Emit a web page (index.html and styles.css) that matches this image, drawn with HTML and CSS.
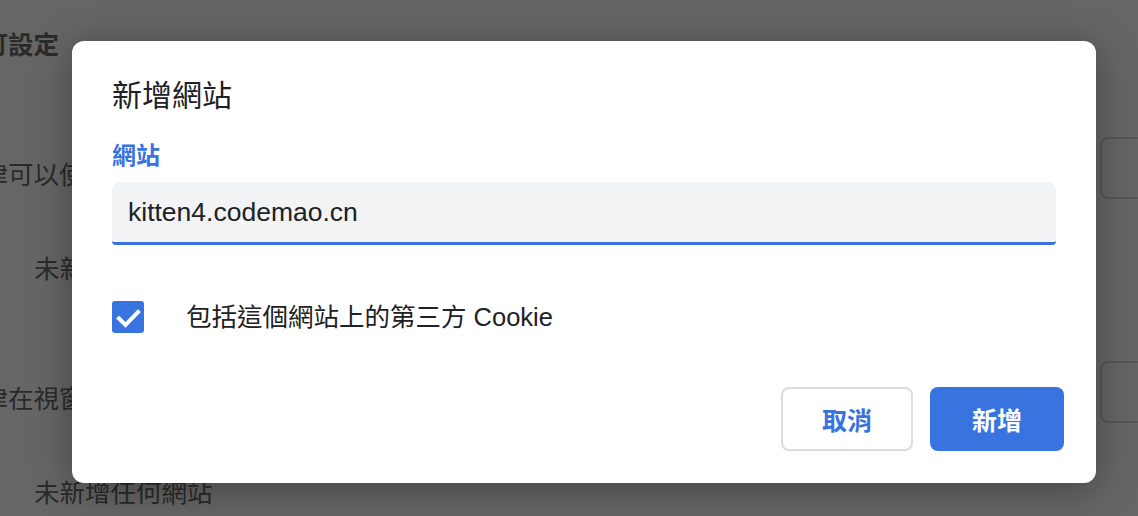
FILE: index.html
```html
<!DOCTYPE html>
<html lang="zh-Hant">
<head>
<meta charset="utf-8">
<title>新增網站</title>
<link rel="stylesheet" href="styles.css">
</head>
<body>
<div class="page">
  <h2 class="page-heading">自訂設定</h2>
  <div class="page-row">
    <span class="row-label">一律可以使用 Cookie 的網站</span>
    <span class="ghost-btn"></span>
  </div>
  <div class="empty-note">未新增任何網站</div>
  <div class="page-row page-row-second">
    <span class="row-label">一律在視窗關閉時清除 Cookie 的網站</span>
    <span class="ghost-btn"></span>
  </div>
  <div class="empty-note">未新增任何網站</div>
</div>

<div class="dialog" role="dialog">
  <h1 class="dialog-title">新增網站</h1>
  <label class="field-label" for="site">網站</label>
  <div class="field">
    <input id="site" class="field-input" type="text" value="kitten4.codemao.cn">
  </div>
  <div class="check-row">
    <span class="checkbox">
      <svg width="32" height="32" viewBox="0 0 32 32"><polyline points="7,17.5 13.5,24 26,11" fill="none" stroke="#fff" stroke-width="4" stroke-linecap="square"/></svg>
    </span>
    <span class="check-label">包括這個網站上的第三方 Cookie</span>
  </div>
  <div class="actions">
    <button class="btn btn-cancel">取消</button>
    <button class="btn btn-primary">新增</button>
  </div>
</div>
</body>
</html>
```
FILE: styles.css
```css
html, body {
  margin: 0;
  padding: 0;
}
body {
  width: 1138px;
  height: 516px;
  overflow: hidden;
  background: #666666;
  font-family: "Liberation Sans", "Noto Sans CJK TC", sans-serif;
  position: relative;
}
.page {
  margin-left: -43px;
  width: 1243px;
  color: #2a2a2a;
  font-size: 25.5px;
  line-height: 28px;
  white-space: nowrap;
}
.page-heading {
  margin: 0;
  padding-top: 31px;
  font-size: 25.5px;
  font-weight: 700;
  line-height: 28px;
}
.page-row {
  display: flex;
  justify-content: space-between;
  align-items: flex-start;
  margin-top: 78px;
}
.page-row-second {
  margin-top: 78px;
}
.row-label {
  padding-top: 24px;
}
.ghost-btn {
  width: 100px;
  height: 62px;
  box-sizing: border-box;
  border: 2px solid #575757;
  border-radius: 8px;
}
.empty-note {
  padding-left: 77px;
  margin-top: 56px;
}

.dialog {
  position: absolute;
  left: 72px;
  top: 41px;
  width: 1024px;
  height: 442px;
  box-sizing: border-box;
  background: #ffffff;
  border-radius: 12px;
  box-shadow: 0 6px 40px rgba(0, 0, 0, 0.35);
  padding: 35px 32px 32px 40px;
  display: flex;
  flex-direction: column;
}
.dialog-title {
  margin: 0;
  font-size: 30px;
  font-weight: 400;
  line-height: 40px;
  color: #202124;
}
.field-label {
  margin-top: 26px;
  font-size: 24px;
  font-weight: 700;
  line-height: 28px;
  color: #3873e0;
}
.field {
  margin-top: 12px;
  margin-right: 8px;
}
.field-input {
  display: block;
  width: 100%;
  height: 63px;
  box-sizing: border-box;
  border: none;
  border-bottom: 3px solid #3873e0;
  border-radius: 8px 8px 4px 4px;
  background: #f1f3f4;
  padding: 0 16px;
  font-family: "Liberation Sans", "Noto Sans CJK TC", sans-serif;
  font-size: 26.5px;
  color: #202124;
  outline: none;
}
.check-row {
  display: flex;
  align-items: center;
  margin-top: 56px;
}
.checkbox {
  width: 32px;
  height: 32px;
  background: #3873e0;
  border-radius: 3px;
  display: flex;
}
.check-label {
  margin-left: 42px;
  font-size: 25.5px;
  line-height: 32px;
  color: #202124;
}
.actions {
  margin-top: auto;
  display: flex;
  justify-content: flex-end;
  gap: 17px;
}
.btn {
  height: 64px;
  box-sizing: border-box;
  border-radius: 8px;
  font-family: "Liberation Sans", "Noto Sans CJK TC", sans-serif;
  font-size: 25px;
  font-weight: 700;
  padding: 0;
}
.btn-cancel {
  width: 132px;
  background: #ffffff;
  border: 2px solid #dadce0;
  color: #3873e0;
}
.btn-primary {
  width: 134px;
  background: #3873e0;
  border: none;
  color: #ffffff;
}
```
